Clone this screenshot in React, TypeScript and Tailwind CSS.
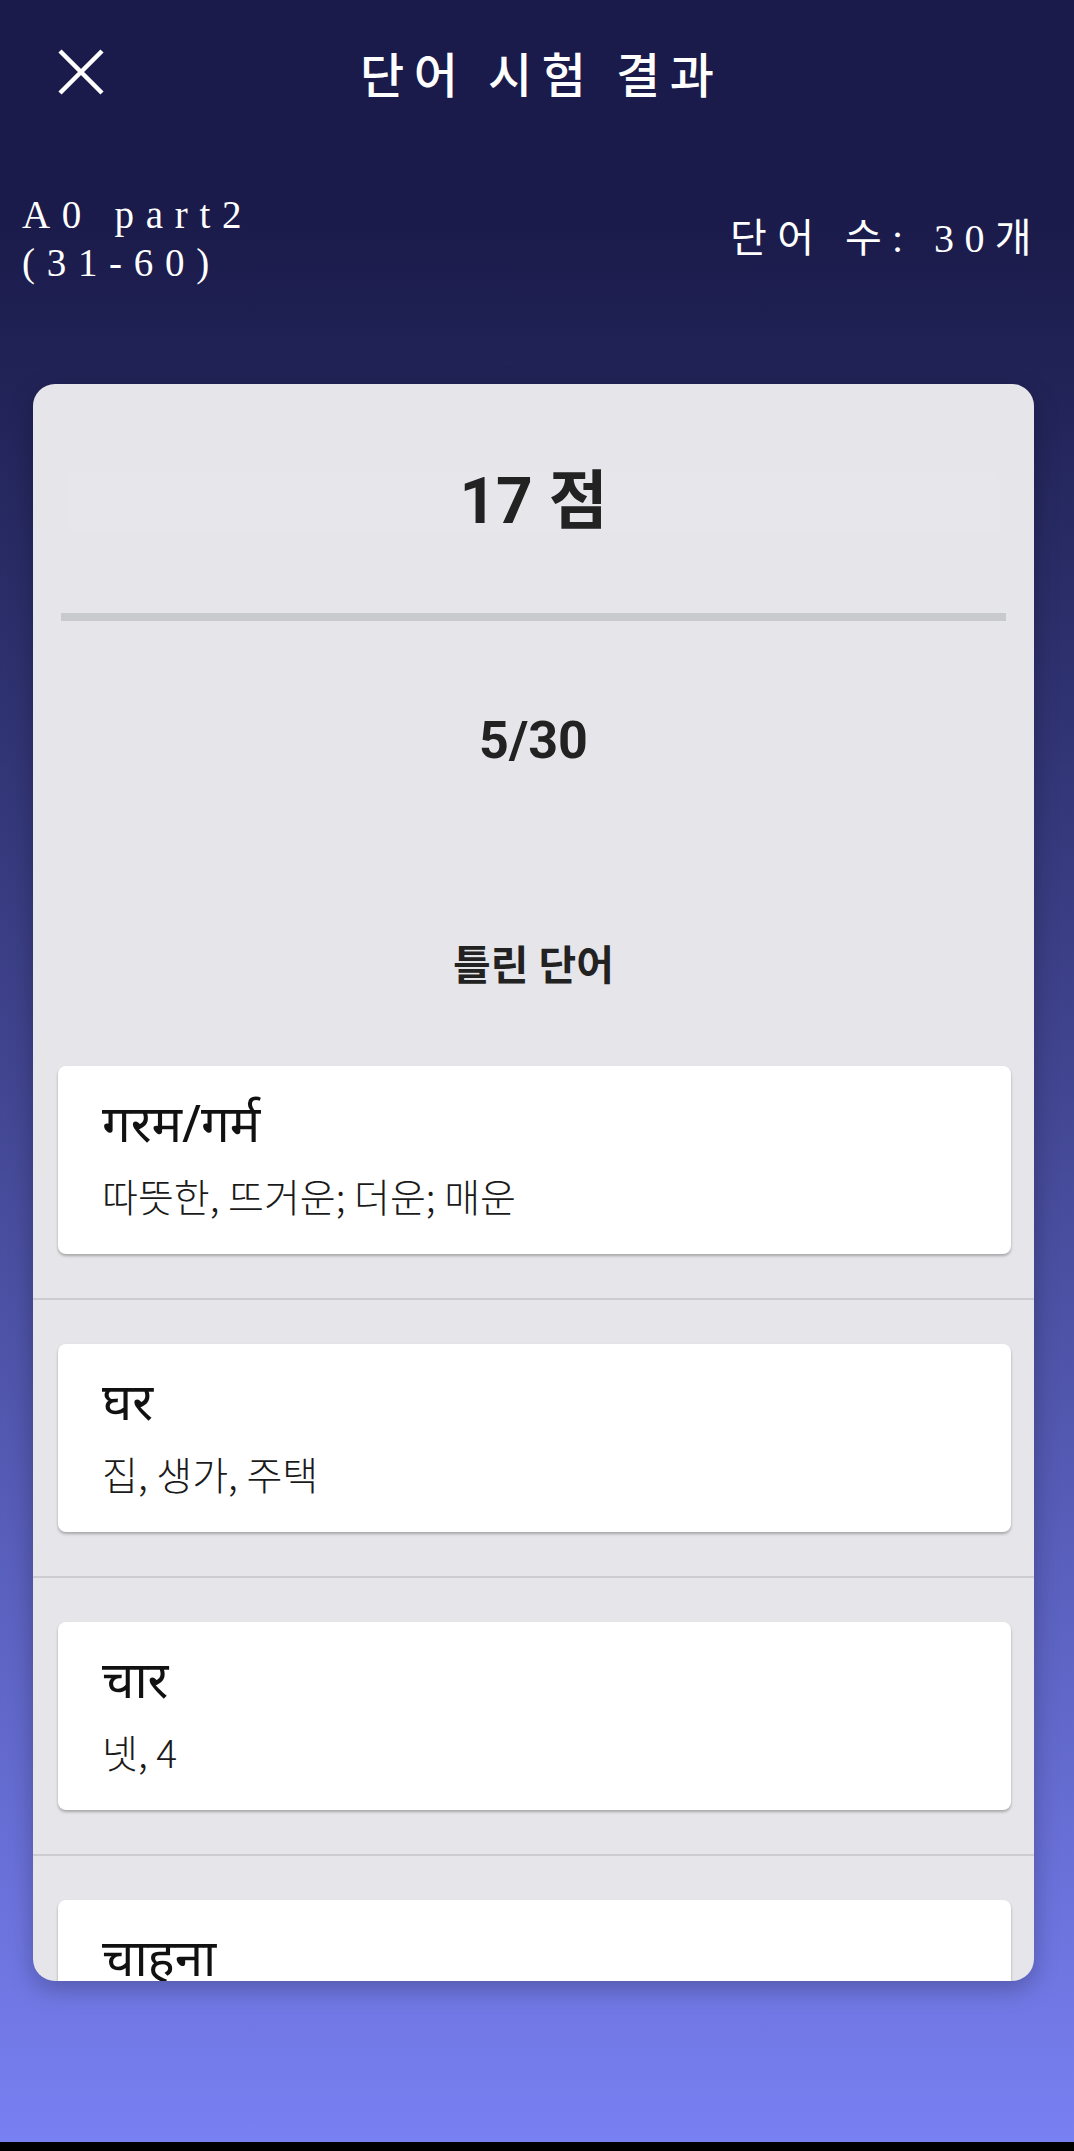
import React from 'react';

interface WrongWord {
  word: string;
  meaning: string;
}

const wrongWords: WrongWord[] = [
  { word: 'गरम/गर्म', meaning: '따뜻한, 뜨거운; 더운; 매운' },
  { word: 'घर', meaning: '집, 생가, 주택' },
  { word: 'चार', meaning: '넷, 4' },
  { word: 'चाहना', meaning: '원하다, 바라다' },
];

const sans = "font-['Roboto','Noto_Sans_CJK_KR',sans-serif]";

const CloseIcon = () => (
  <svg width="46" height="46" viewBox="0 0 46 46" fill="none" stroke="white" strokeWidth="4.5">
    <path d="M2 2L44 44M44 2L2 44" />
  </svg>
);

const WordCard = ({ item }: { item: WrongWord }) => (
  <div className="h-[188px] rounded-lg bg-white px-[44px] pt-[30px] shadow-[0_2px_3px_rgba(0,0,0,0.28)]">
    <div className="font-['Noto_Sans','Noto_Sans_Devanagari','Lohit_Devanagari',sans-serif] text-[51px] font-normal leading-[52px] text-[#111]">
      {item.word}
    </div>
    <div className="mt-[23px] font-['Noto_Sans_CJK_KR',sans-serif] text-[39px] font-light leading-[48px] text-[#1a1a1a]">
      {item.meaning}
    </div>
  </div>
);

export default function App() {
  return (
    <div className="flex h-[2151px] w-[1074px] flex-col">
      <div className="flex h-[2142px] flex-col bg-linear-to-b from-[#1a1b4a] from-10% to-[#7880f2]">
        {/* top bar */}
        <div className="grid h-[144px] grid-cols-[1fr_auto_1fr] items-center">
          <div className="pl-[58px]">
            <CloseIcon />
          </div>
          <h1 className="pl-[0.2em] font-['Noto_Sans_CJK_KR',sans-serif] text-[48px] font-medium tracking-[0.2em] text-white">
            단어 시험 결과
          </h1>
          <div />
        </div>

        {/* set info */}
        <div className="mt-[47px] flex items-center justify-between pl-[22px] pr-[32px] font-['Liberation_Serif','Noto_Sans_CJK_KR',serif] text-[39px] leading-[48px] tracking-[0.3em] text-white">
          <div>
            <div>A0 part2</div>
            <div>(31-60)</div>
          </div>
          <div className="text-[40px] tracking-[0.26em]">단어 수: 30개</div>
        </div>

        {/* result card */}
        <div className="ml-[33px] mt-[97px] h-[1597px] w-[1001px] overflow-hidden rounded-[22px] bg-[#e6e6ea] shadow-[0_8px_24px_rgba(0,0,0,0.25)]">
          <div className="mx-[35px] mt-[88px] rounded-md bg-[#e7e7eb]">
            <div className={`${sans} text-center text-[64px] font-bold leading-[60px] text-[#222]`}>17 점</div>
          </div>

          <div className="mx-[28px] mt-[81px] h-[8px] bg-[#c9cacd]" />

          <div className={`${sans} mt-[90px] text-center text-[52px] font-bold leading-[60px] text-[#222]`}>5/30</div>

          <div className={`${sans} mt-[170px] text-center text-[41px] font-bold leading-[50px] text-[#222]`}>틀린 단어</div>

          <div className="mt-[75px]">
            {wrongWords.map((item) => (
              <div key={item.word}>
                <div className="pl-[25px] pr-[23px]">
                  <WordCard item={item} />
                </div>
                <div className="mt-[44px] mb-[44px] h-[2px] bg-[#cdcdd1]" />
              </div>
            ))}
          </div>
        </div>
      </div>
      <div className="h-[9px] bg-black" />
    </div>
  );
}
